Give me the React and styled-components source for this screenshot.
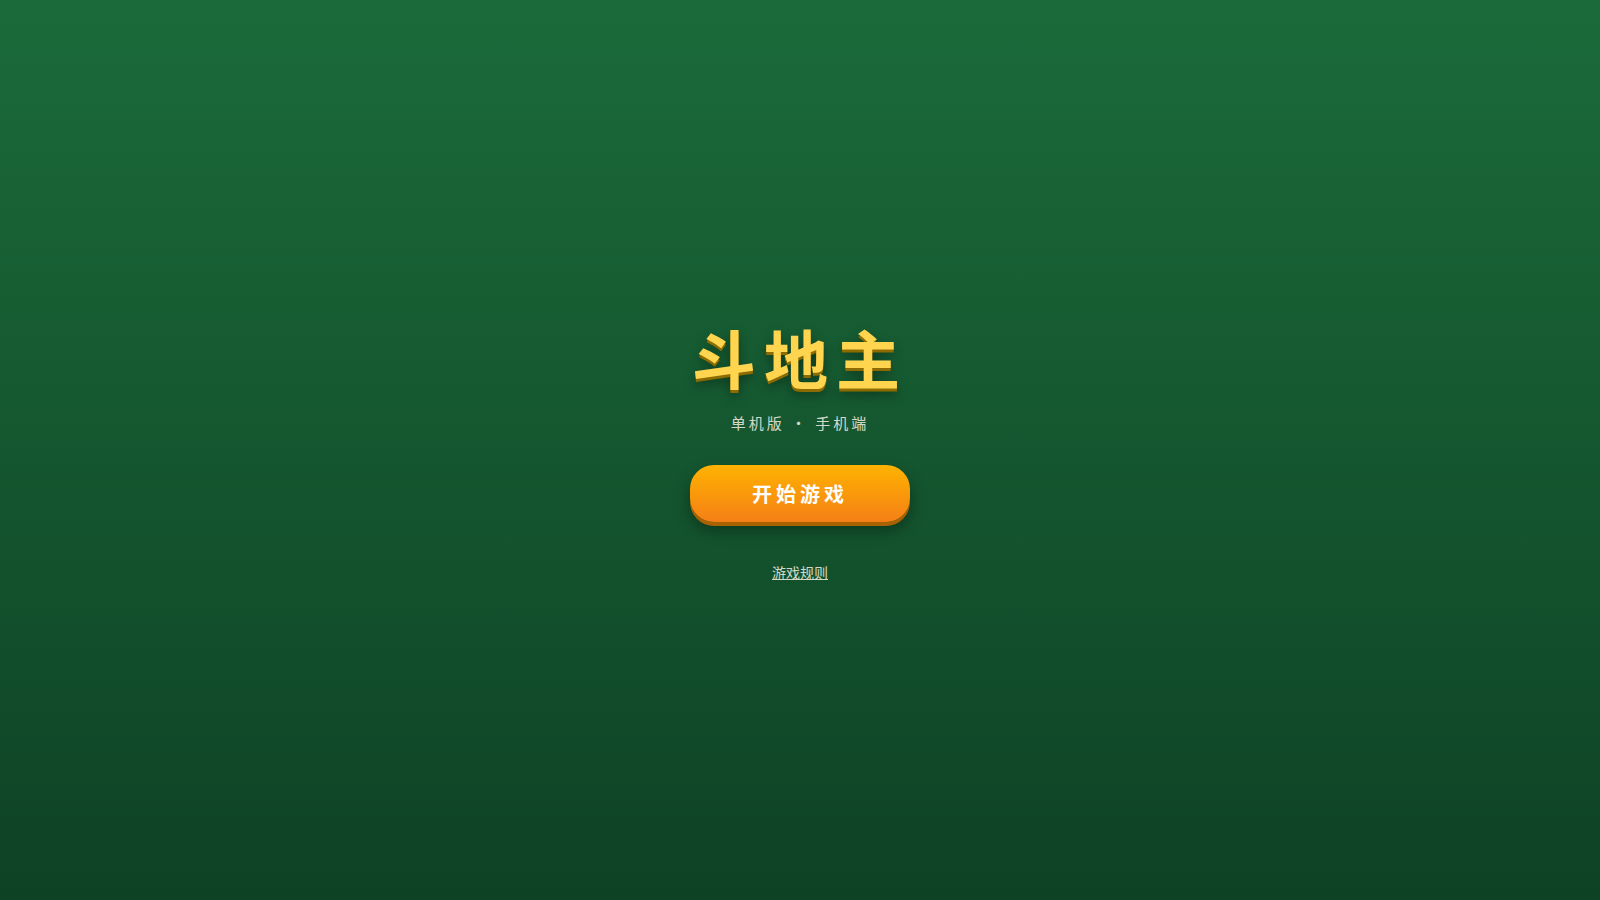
import React from 'react';
import styled, { createGlobalStyle } from 'styled-components';

const GlobalStyle = createGlobalStyle`
  * {
    box-sizing: border-box;
  }

  body {
    margin: 0;
    font-family: 'Noto Sans CJK SC', sans-serif;
  }
`;

const StartScreen = styled.main`
  min-height: 100vh;
  display: flex;
  flex-direction: column;
  align-items: center;
  justify-content: center;
  background: linear-gradient(180deg, #1b6b3a 0%, #0e4225 100%);
`;

const Title = styled.h1`
  margin: 0;
  font-size: 64px;
  line-height: 92px;
  font-weight: 700;
  letter-spacing: 8px;
  color: #ffd54f;
  text-shadow: 0 3px 0 #8d6b00, 0 6px 12px rgba(0, 0, 0, 0.4);
`;

const SubTitle = styled.p`
  margin: 10px 0 31px;
  font-size: 15px;
  line-height: 22px;
  letter-spacing: 3px;
  color: #f5f0e1;
  opacity: 0.85;
`;

const StartButton = styled.button`
  min-width: 220px;
  padding: 14px 40px;
  border: none;
  border-radius: 24px;
  font-family: inherit;
  font-size: 20px;
  line-height: 29px;
  font-weight: 700;
  letter-spacing: 4px;
  color: #ffffff;
  background: linear-gradient(180deg, #ffb300, #f57f17);
  box-shadow: 0 4px 0 #a86200, 0 8px 16px rgba(0, 0, 0, 0.35);
  cursor: pointer;
`;

const RulesButton = styled.button`
  margin-top: 32px;
  padding: 8px;
  border: none;
  background: none;
  font-family: inherit;
  font-size: 14px;
  line-height: 21px;
  color: #f5f0e1;
  opacity: 0.85;
  text-decoration: underline;
  cursor: pointer;
`;

const App = () => {
  return (
    <>
      <GlobalStyle />
      <StartScreen lang="zh-CN">
        <Title>斗地主</Title>
        <SubTitle>单机版 · 手机端</SubTitle>
        <StartButton type="button">开始游戏</StartButton>
        <RulesButton type="button">游戏规则</RulesButton>
      </StartScreen>
    </>
  );
};

export default App;
